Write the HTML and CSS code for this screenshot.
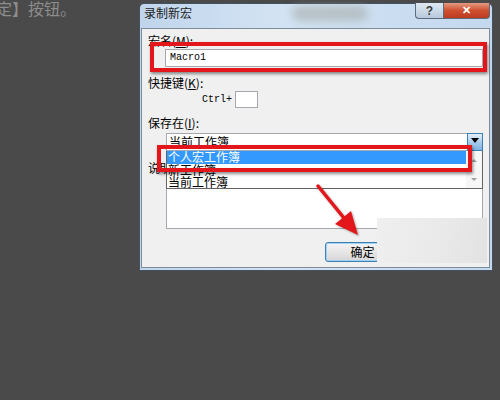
FILE: index.html
```html
<!DOCTYPE html>
<html lang="zh-CN">
<head>
  <meta charset="UTF-8">
  <meta name="viewport" content="width=device-width, initial-scale=1.0">
  <title>录制新宏</title>
  <link rel="stylesheet" href="styles.css">
</head>
<body>
  <div class="screen">
    <p class="caption">确定】按钮。</p>

    <div class="dialog">
      <div class="titlebar">
        <span class="title">录制新宏</span>
        <div class="title-btns">
          <span class="help-btn">?</span>
          <span class="close-btn">&#10005;</span>
        </div>
      </div>

      <div class="client">
        <label class="field-label">宏名(<u>M</u>):</label>
        <div class="textbox name-box">Macro1</div>

        <label class="field-label gap-9">快捷键(<u>K</u>):</label>
        <div class="shortcut">
          <span class="ctrl">Ctrl+</span>
          <div class="textbox key-box"></div>
        </div>

        <label class="field-label gap-8">保存在(<u>I</u>):</label>
        <div class="combo">
          <span class="combo-text">当前工作簿</span>
          <span class="drop-btn"></span>
        </div>

        <label class="field-label gap-10">说明(<u>D</u>):</label>
        <div class="textbox memo"></div>

        <div class="buttons">
          <button class="btn default">确定</button>
          <button class="btn">取消</button>
        </div>

        <ul class="droplist">
          <li class="selected">个人宏工作簿</li>
          <li>新工作簿</li>
          <li>当前工作簿</li>
          <span class="list-scroll">
            <span class="arrow-up"></span>
            <span class="arrow-down"></span>
          </span>
        </ul>
      </div>
    </div>

    <!-- annotations drawn over the screenshot -->
    <div class="mark mark-name"></div>
    <div class="mark mark-list"></div>
    <svg class="arrow" width="500" height="400" viewBox="0 0 500 400">
      <line x1="318" y1="186" x2="348" y2="223" stroke="#e3161b" stroke-width="3.5" stroke-linecap="round"/>
      <polygon points="358,235 335,224 351,211" fill="#e3161b"/>
    </svg>
    <div class="watermark"></div>
    <div class="title-blur"></div>
  </div>
</body>
</html>
```

FILE: styles.css
```css
/* Reset */
body, html {
  margin: 0;
  padding: 0;
}

body {
  background-color: #4a4a4a;
  font-family: "Noto Sans CJK SC", "Liberation Sans", sans-serif;
  font-size: 12px;
  color: #000;
}

.screen {
  position: relative;
  width: 500px;
  height: 400px;
  overflow: hidden;
  display: flex;
  align-items: flex-start;
}

/* Text of the article behind the dialog */
.caption {
  margin: -2px 0 0 -20px;
  width: 159px;
  flex-shrink: 0;
  font-size: 16px;
  line-height: 20px;
  color: #8d8d8d;
  white-space: nowrap;
}

/* Window frame */
.dialog {
  margin-top: 3px;
  width: 354px;
  height: 268px;
  box-sizing: border-box;
  border: 1px solid #42505f;
  border-radius: 5px 5px 0 0;
  background: linear-gradient(to right, #c0d5ec, #d3e3f3 40%, #c4d8ee);
  padding: 0 2px 2px 1px;
  display: flex;
  flex-direction: column;
}

.titlebar {
  height: 24px;
  display: flex;
  align-items: flex-start;
  padding-left: 3px;
}

.title {
  line-height: 18px;
  font-size: 12px;
  color: #1b1b1b;
}

.title-btns {
  margin-left: auto;
  margin-top: -1px;
  display: flex;
}

.help-btn,
.close-btn {
  height: 16px;
  box-sizing: border-box;
  border: 1px solid #5b6a7c;
  border-top: none;
  display: flex;
  align-items: center;
  justify-content: center;
  font-family: "Liberation Sans", sans-serif;
  font-weight: bold;
}

.help-btn {
  width: 28px;
  border-right: none;
  border-radius: 0 0 0 4px;
  background: linear-gradient(#dfe8f2, #b8c9dc);
  color: #3a3a3a;
  font-size: 12px;
}

.close-btn {
  width: 47px;
  border-radius: 0 0 4px 0;
  background: linear-gradient(#e59a80, #cf4f30 50%, #bb3b20);
  color: #fff;
  font-size: 11px;
}

/* Client area */
.client {
  position: relative;
  height: 240px;
  box-sizing: border-box;
  border: 1px solid #7d8b9b;
  background-color: #f0f0f0;
  padding: 5px 6px 0 6px;
  display: flex;
  flex-direction: column;
}

.field-label {
  line-height: 14px;
  height: 14px;
}

.gap-8 { margin-top: 8px; }
.gap-9 { margin-top: 9px; }
.gap-10 { margin-top: 10px; }

.textbox {
  background-color: #fff;
  border: 1px solid #a4a9b0;
  box-sizing: border-box;
}

.name-box {
  margin: 1px 0 0 17px;
  height: 18px;
  padding-left: 4px;
  font-family: "Liberation Mono", monospace;
  font-size: 10px;
  line-height: 16px;
}

.shortcut {
  margin-top: 1px;
  display: flex;
  align-items: center;
  height: 17px;
}

.ctrl {
  margin-left: 54px;
  width: 30px;
  font-family: "Liberation Mono", monospace;
  font-size: 10px;
}

.key-box {
  margin-left: 3px;
  width: 23px;
  height: 17px;
}

.combo {
  margin: 3px 0 0 18px;
  height: 18px;
  box-sizing: border-box;
  border: 1px solid #a4a9b0;
  background-color: #fff;
  display: flex;
  align-items: center;
}

.combo-text {
  padding-left: 2px;
  line-height: 14px;
}

.drop-btn {
  margin-left: auto;
  width: 16px;
  height: 18px;
  margin-right: -1px;
  box-sizing: border-box;
  border: 1px solid #3c7fb1;
  background: linear-gradient(#e6f0fa, #a9cdee 50%, #7db3e2);
  position: relative;
}

.drop-btn::after {
  content: "";
  position: absolute;
  left: 3px;
  top: 4px;
  border-left: 4px solid transparent;
  border-right: 4px solid transparent;
  border-top: 5px solid #000;
}

.memo {
  margin: 2px 0 0 18px;
  height: 52px;
}

.buttons {
  margin-top: 13px;
  display: flex;
  justify-content: flex-end;
  gap: 8px;
}

.btn {
  width: 75px;
  height: 20px;
  padding: 0;
  border: 1px solid #707070;
  border-radius: 3px;
  background: linear-gradient(#f4f4f4, #e6e6e6 50%, #d6d6d6);
  font-family: "Noto Sans CJK SC", sans-serif;
  font-size: 12px;
  line-height: 16px;
  color: #000;
}

.btn.default {
  border-color: #3c7fb1;
  box-shadow: inset 0 0 0 1px #9fd3f5;
}

/* Opened drop-down list of the combo box */
.droplist {
  position: absolute;
  left: 24px;
  top: 122px;
  width: 317px;
  height: 38px;
  margin: 0;
  padding: 0;
  list-style: none;
  box-sizing: border-box;
  border: 1px solid #646464;
  border-top: none;
  background-color: #fff;
}

.droplist li {
  height: 12px;
  line-height: 12px;
  padding-left: 1px;
  margin-right: 16px;
}

.droplist li.selected {
  height: 13px;
  background-color: #3399ff;
  color: #fff;
}

.list-scroll {
  position: absolute;
  right: 0;
  top: 0;
  width: 16px;
  height: 100%;
  background-color: #f6f6f6;
}

.arrow-up,
.arrow-down {
  position: absolute;
  left: 5px;
  border-left: 3px solid transparent;
  border-right: 3px solid transparent;
}

.arrow-up {
  top: 8px;
  border-bottom: 3px solid #a0a0a0;
}

.arrow-down {
  top: 27px;
  border-top: 3px solid #a0a0a0;
}

/* Red annotation frames */
.mark {
  position: absolute;
  box-sizing: border-box;
  border: 4px solid #e3161b;
  box-shadow: 1px 2px 3px rgba(0, 0, 0, 0.45);
}

.mark-name {
  left: 150px;
  top: 42px;
  width: 337px;
  height: 30px;
}

.mark-list {
  left: 157px;
  top: 145px;
  width: 315px;
  height: 27px;
}

.arrow {
  position: absolute;
  left: 0;
  top: 0;
  filter: drop-shadow(1px 1px 1px rgba(0, 0, 0, 0.35));
}

/* Blurred watermark patches */
.watermark {
  position: absolute;
  left: 377px;
  top: 218px;
  width: 110px;
  height: 45px;
  background: linear-gradient(100deg, #efefef, #e9e9e9 60%, #e2e2e2);
  filter: blur(0.6px);
}

.title-blur {
  position: absolute;
  left: 292px;
  top: 6px;
  width: 76px;
  height: 15px;
  border-radius: 8px;
  background-color: rgba(160, 166, 160, 0.55);
  filter: blur(4px);
}
```
